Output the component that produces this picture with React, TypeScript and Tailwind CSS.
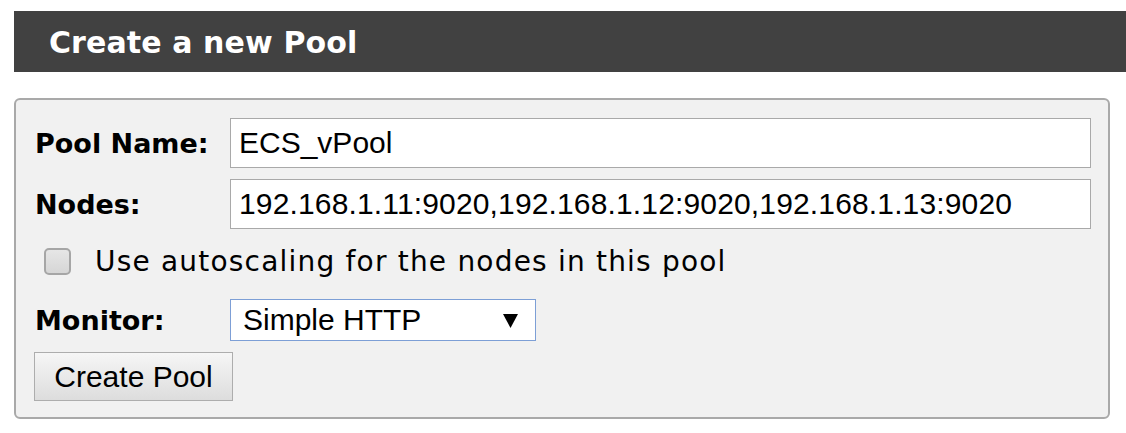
export default function App() {
  const verdana = "font-['Verdana','DejaVu_Sans',sans-serif]";
  const arial = "font-['Arial','Liberation_Sans',sans-serif]";

  return (
    <div className="w-[1126px] h-[433px] bg-white pt-[11px] overflow-hidden">
      <div className="ml-[14px] h-[61px] bg-[#414141] flex items-center pl-[35px] pt-[3px]">
        <h2 className={`${verdana} text-white font-bold text-[30px] tracking-[0.1px] leading-none`}>
          Create a new Pool
        </h2>
      </div>

      <div className="mt-[26px] ml-[14px] mr-[16px] h-[321px] border-2 border-[#a9a9a9] rounded-[6px] bg-[#f1f1f1] pl-[19px] pr-[17px] pt-[18px]">
        <div className="flex items-center h-[50px]">
          <label className={`${verdana} w-[195px] font-bold text-[27px] text-black leading-none`}>
            Pool Name:
          </label>
          <input
            readOnly
            value="ECS_vPool"
            className={`${arial} flex-1 h-[50px] bg-white border border-[#a9a9a9] px-[8px] text-[30px] text-black outline-none`}
          />
        </div>

        <div className="flex items-center h-[50px] mt-[11px]">
          <label className={`${verdana} w-[195px] font-bold text-[27px] text-black leading-none`}>
            Nodes:
          </label>
          <input
            readOnly
            value="192.168.1.11:9020,192.168.1.12:9020,192.168.1.13:9020"
            className={`${arial} flex-1 h-[50px] bg-white border border-[#a9a9a9] px-[8px] text-[30px] tracking-[0.15px] text-black outline-none`}
          />
        </div>

        <div className="flex items-center h-[27px] mt-[19px] ml-[9px] gap-[24px]">
          <div className="w-[27px] h-[27px] rounded-[5px] border-2 border-[#a6a6a6] bg-gradient-to-b from-[#e6e6e6] to-[#d6d6d6]" />
          <span className={`${verdana} text-[28px] tracking-[1.2px] text-black leading-none`}>
            Use autoscaling for the nodes in this pool
          </span>
        </div>

        <div className="flex items-center h-[42px] mt-[24px]">
          <label className={`${verdana} w-[195px] font-bold text-[27px] text-black leading-none`}>
            Monitor:
          </label>
          <div className="w-[306px] h-[42px] bg-white border border-[#7d9fd6] flex items-center justify-between pl-[12px] pr-[17px]">
            <span className={`${arial} text-[30px] text-black leading-none`}>Simple HTTP</span>
            <svg width="15" height="14" viewBox="0 0 15 14" className="mt-[1px]">
              <polygon points="0,0 15,0 7.5,14" fill="#000" />
            </svg>
          </div>
        </div>

        <button
          className={`${arial} mt-[11px] -ml-[1px] w-[199px] h-[49px] border border-[#adadad] bg-gradient-to-b from-[#f6f6f6] to-[#dddddd] text-[30px] text-black leading-none`}
        >
          Create Pool
        </button>
      </div>
    </div>
  );
}
